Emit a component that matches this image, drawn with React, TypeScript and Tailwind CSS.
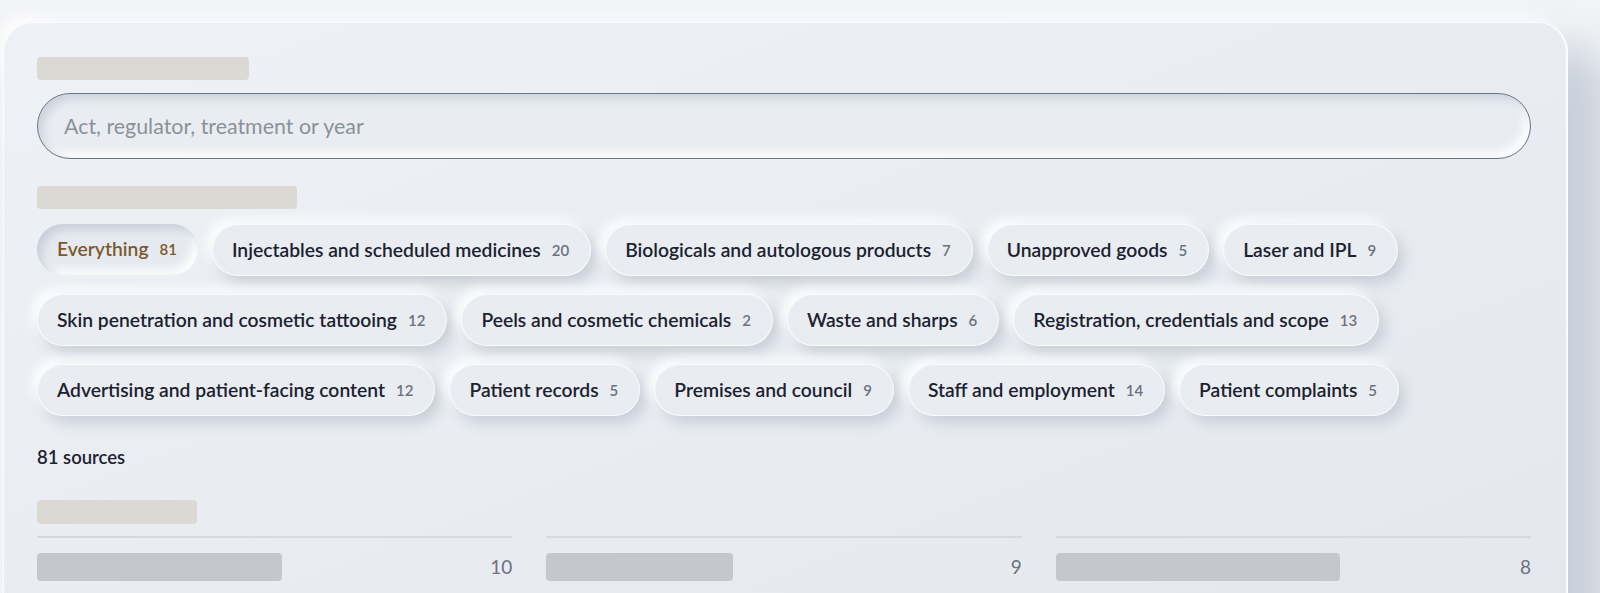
const chips: { label: string; count: number; active?: boolean }[][] = [
  [
    { label: "Everything", count: 81, active: true },
    { label: "Injectables and scheduled medicines", count: 20 },
    { label: "Biologicals and autologous products", count: 7 },
    { label: "Unapproved goods", count: 5 },
    { label: "Laser and IPL", count: 9 },
  ],
  [
    { label: "Skin penetration and cosmetic tattooing", count: 12 },
    { label: "Peels and cosmetic chemicals", count: 2 },
    { label: "Waste and sharps", count: 6 },
    { label: "Registration, credentials and scope", count: 13 },
  ],
  [
    { label: "Advertising and patient-facing content", count: 12 },
    { label: "Patient records", count: 5 },
    { label: "Premises and council", count: 9 },
    { label: "Staff and employment", count: 14 },
    { label: "Patient complaints", count: 5 },
  ],
];

const columns = [
  { bar: 245, count: 10 },
  { bar: 187, count: 9 },
  { bar: 284, count: 8 },
];

function Chip({ label, count, active }: { label: string; count: number; active?: boolean }) {
  if (active) {
    return (
      <button className="flex h-[51px] items-center gap-[11px] rounded-full bg-[#e6eaf0] pl-[20px] pr-[21px] shadow-[inset_5px_5px_10px_#c8ced8,inset_-5px_-5px_10px_#ffffff]">
        <span className="text-[19.3px] font-semibold text-[#7a5a2c]">{label}</span>
        <span className="text-[15px] font-semibold text-[#7a5a2c]">{count}</span>
      </button>
    );
  }
  return (
    <button className="flex h-[52px] items-center gap-[11px] rounded-full border border-white/80 bg-[#e9edf2] pl-[19px] pr-[21px] shadow-[6px_7px_14px_#c9ced7,-5px_-5px_12px_#ffffff]">
      <span className="text-[19.3px] font-semibold text-[#1c2230]">{label}</span>
      <span className="text-[15px] font-semibold text-[#6b7280]">{count}</span>
    </button>
  );
}

export default function App() {
  return (
    <div className="h-[593px] overflow-hidden bg-[#f2f3f6] pl-[3px] pt-[22px] font-['Lato',sans-serif]">
      <div className="w-[1565px] rounded-t-[30px] border-l border-r-2 border-t border-white/90 bg-gradient-to-br from-[#eef1f5] to-[#e4e8ee] pb-10 pl-[33px] pr-[35px] pt-[34px] shadow-[30px_36px_44px_12px_#c8d0da,-6px_-6px_16px_#ffffff]">
        <div className="h-[23px] w-[212px] rounded-[4px] bg-[#dcd9d4]" />
        <div className="mt-[13px] flex h-[66px] items-center rounded-full border border-[#6b7583] bg-[#e9edf2] px-[26px] shadow-[inset_5px_5px_10px_#cdd3dc,inset_-5px_-5px_10px_#ffffff]">
          <span className="text-[21.4px] text-[#8a9199]">Act, regulator, treatment or year</span>
        </div>
        <div className="mt-[27px] h-[23px] w-[260px] rounded-[4px] bg-[#dcd9d4]" />
        <div className="mt-[15px] flex flex-col gap-[18px]">
          {chips.map((row, i) => (
            <div key={i} className="flex gap-[14px]">
              {row.map((c) => (
                <Chip key={c.label} {...c} />
              ))}
            </div>
          ))}
        </div>
        <div className="mt-[28px] text-[18.5px] font-semibold text-[#1c2230]">81 sources</div>
        <div className="mt-[28px] h-[24px] w-[160px] rounded-[4px] bg-[#dcd9d4]" />
        <div className="mt-[12px] grid grid-cols-3 gap-[34px]">
          {columns.map((c, i) => (
            <div key={i} className="border-t-2 border-[#d6dae0] pt-[15px]">
              <div className="flex items-center justify-between">
                <div className="h-[28px] rounded-[4px] bg-[#c4c8ce]" style={{ width: c.bar }} />
                <span className="text-[19px] text-[#6b7280]">{c.count}</span>
              </div>
            </div>
          ))}
        </div>
      </div>
    </div>
  );
}
